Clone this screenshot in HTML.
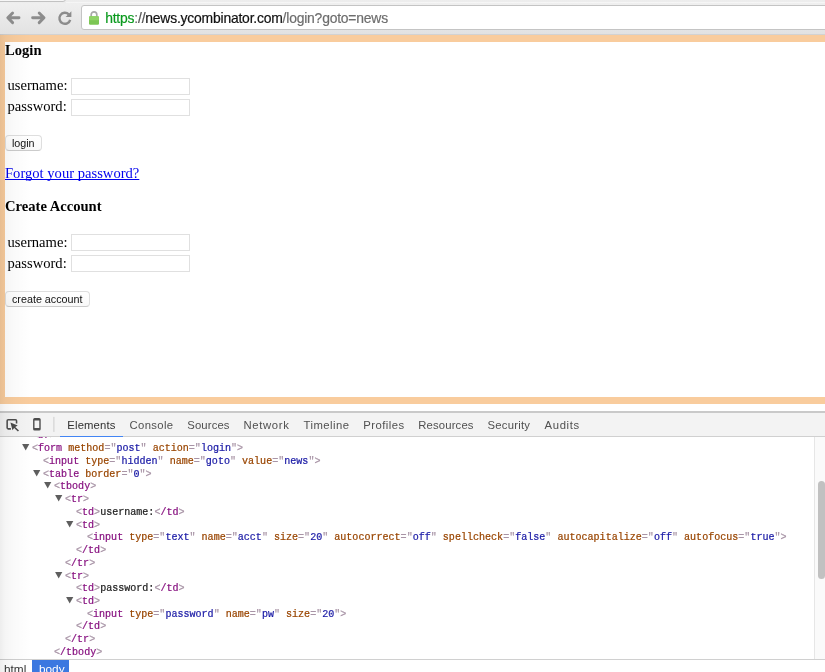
<!DOCTYPE html>
<html><head><meta charset="utf-8">
<style>
*{box-sizing:border-box;margin:0;padding:0}
html,body{width:825px;height:672px;overflow:hidden;background:#fff}
body{position:relative;font-family:"Liberation Sans",sans-serif;will-change:transform}
.abs{position:absolute}
#tabstrip{left:0;top:0;width:825px;height:3px;}
#tabstrip .tab{position:absolute;left:-2px;top:-3px;width:67.5px;height:5.4px;background:#f6f6f6;border:1px solid #c2c2c2;border-radius:0 0 3px 0}
#tabstrip .hl{position:absolute;left:66px;top:2.2px;width:760px;height:1px;background:rgba(255,255,255,0.45)}
#chrome{left:0;top:0px;width:825px;height:34.6px;background:linear-gradient(#ececec,#efefef 12%,#e2e2e2);border-bottom:1px solid #d2d2d2}
#urlbox{left:81px;top:5.4px;width:760px;height:24.2px;background:#fff;border:1px solid #c4c4c4;border-radius:3px;}
#url{left:105.2px;top:10.1px;font-size:13.9px;line-height:16px;white-space:nowrap;color:#6e6e6e;letter-spacing:-0.2px;-webkit-text-stroke:0.2px currentColor}
#url .g{color:#0b9a1e}#url .d{color:#111}#url .s{color:#555}
#orange{left:0;top:34.5px;width:825px;height:369.4px;background:#f9cc9d}
#page{left:4.5px;top:42px;width:821px;height:355px;background:#fff;font-family:"Liberation Serif",serif;font-size:14.6px;color:#000}
.t{position:absolute;white-space:nowrap;line-height:1}
.inp{position:absolute;width:119px;height:17px;border:1px solid #e0e0e0;background:#fff}
.btn{position:absolute;height:16px;border:1px solid #dedede;border-bottom-color:#cbcbcb;border-radius:4px;background:linear-gradient(#fff,#f9f9f9);font-family:"Liberation Sans",sans-serif;font-size:10.75px;line-height:15.4px;text-align:center;color:#111;white-space:nowrap}
.btn span{display:inline-block}
#dt{left:0;top:404px;width:825px;height:268px;background:#fff}
#dtbar{left:0;top:411px;width:825px;height:25.9px;background:#f3f3f3;border-top:2px solid #c9c9c9;border-bottom:1px solid #d0d0d0}
.tabl{position:absolute;top:417.7px;font-size:11.3px;line-height:14px;color:#333;white-space:nowrap}
#tree{left:0;top:437px;width:815px;height:222px;overflow:hidden;font-family:"Liberation Mono",monospace;font-size:10.05px;color:#222}
.ln{position:absolute;white-space:pre;-webkit-text-stroke:0.22px;line-height:12.73px;height:12.73px}
.tg{color:#a894a6}.tn{color:#881280}.an{color:#994500}.av{color:#1a1aa6}.tx{color:#222}
.trs{position:absolute}
.tri{position:absolute;width:0;height:0;border-left:3.9px solid transparent;border-right:3.9px solid transparent;border-top:6.6px solid #5c5c5c}
#sbar{left:814px;top:437px;width:11px;height:222px;background:#fafafa;border-left:1px solid #e6e6e6}
#thumb{left:817.9px;top:480.8px;width:7.2px;height:98.2px;background:#c1c1c1;border-radius:3.6px}
#crumbs{left:0;top:659px;width:825px;height:13px;background:#fff;border-top:1px solid #d0d0d0}
#shade{left:0;top:34px;width:32px;height:638px;background:linear-gradient(to right,rgba(0,0,0,0.07),rgba(0,0,0,0.04) 5px,rgba(0,0,0,0.018) 14px,rgba(0,0,0,0) 32px)}
</style></head><body>
<div class="abs" id="chrome"></div>
<div class="abs" id="tabstrip"><div class="tab"></div><div class="hl"></div></div>
<svg class="abs" style="left:0;top:3px" width="81" height="31" viewBox="0 0 81 31">
 <g fill="none" stroke="#8c8c8c" stroke-width="2.9" stroke-linecap="round" stroke-linejoin="round">
  <path d="M19 14.8H8.4M12.6 10L7.8 14.8L12.6 19.6"/>
  <path d="M32.6 14.8H43.4M39.2 10L44 14.8L39.2 19.6"/>
 </g>
 <path d="M68.8 11.4A5.5 5.5 0 1 0 70.2 16.8" fill="none" stroke="#8c8c8c" stroke-width="2.4"/>
 <path d="M71.4 8.2V14H65.6Z" fill="#8c8c8c"/>
</svg>
<div class="abs" id="urlbox"></div>
<svg class="abs" style="left:87.6px;top:10.2px" width="12" height="16" viewBox="0 0 12 16">
 <path d="M3.2 7V4.6A2.8 2.8 0 0 1 8.8 4.6V7" fill="none" stroke="#a9a9a9" stroke-width="1.7"/>
 <rect x="1" y="6.2" width="10" height="8.6" rx="1.2" fill="#7cc653"/>
 <rect x="1" y="6.2" width="10" height="4" rx="1.2" fill="#8fd366"/>
</svg>
<div class="abs" id="url"><span class="g">https</span>:<span class="s">//</span><span class="d">news.ycombinator.com</span>/login?goto=news</div>

<div class="abs" id="orange"></div>
<div class="abs" id="page">
<div class="t" style="left:0.50px;top:1.10px;font-weight:bold">Login</div>
<div class="t" style="left:3.00px;top:36.10px;">username:</div>
<div class="inp" style="left:66.5px;top:35.5px"></div>
<div class="t" style="left:3.00px;top:57.10px;">password:</div>
<div class="inp" style="left:66.5px;top:56.5px"></div>
<div class="btn" style="left:0.5px;top:92.7px;width:36.5px"><span>login</span></div>
<div class="t" style="left:0.50px;top:124.10px;color:#0000ee;text-decoration:underline;text-decoration-skip-ink:none;text-underline-offset:1.2px;text-decoration-thickness:1px">Forgot your password?</div>
<div class="t" style="left:0.50px;top:157.10px;font-weight:bold">Create Account</div>
<div class="t" style="left:3.00px;top:193.10px;">username:</div>
<div class="inp" style="left:66.5px;top:192.3px"></div>
<div class="t" style="left:3.00px;top:214.10px;">password:</div>
<div class="inp" style="left:66.5px;top:213.3px"></div>
<div class="btn" style="left:0.5px;top:249.2px;width:84.5px"><span>create account</span></div>
</div>

<div class="abs" id="dt"></div>
<div class="abs" id="dtbar"></div>
<svg class="abs" style="left:4px;top:416px" width="52" height="18" viewBox="0 0 52 18">
 <path d="M6.9 12.85H4.2Q3.15 12.85 3.15 11.8V4.7Q3.15 3.65 4.2 3.65H11.5Q12.55 3.65 12.55 4.7V7.6" fill="none" stroke="#4d4d4d" stroke-width="1.55"/>
 <path d="M6.4 6.6L13.7 9.6L11.2 10.9L15 14.5L13.9 15.6L10.1 12L8.5 14.3Z" fill="#4a4a4a"/>
 <path fill-rule="evenodd" fill="#4d4d4d" d="M30.7 2H35.1Q36.7 2 36.7 3.6V12.9Q36.7 14.5 35.1 14.5H30.7Q29.1 14.5 29.1 12.9V3.6Q29.1 2 30.7 2ZM30.5 4.5V11.9H35.3V4.5Z"/>
 <rect x="49.4" y="0.9" width="1" height="15" fill="#cdcdcd"/>
</svg>
<div class="abs" style="left:60px;top:435.6px;width:63px;height:1.4px;background:#4285f4"></div>
<div class="tabl" style="left:67.30px;letter-spacing:0.143px;color:#303030">Elements</div>
<div class="tabl" style="left:129.50px;letter-spacing:0.367px;color:#505050">Console</div>
<div class="tabl" style="left:187.30px;letter-spacing:0.117px;color:#505050">Sources</div>
<div class="tabl" style="left:243.50px;letter-spacing:0.650px;color:#505050">Network</div>
<div class="tabl" style="left:303.60px;letter-spacing:0.443px;color:#505050">Timeline</div>
<div class="tabl" style="left:363.30px;letter-spacing:0.457px;color:#505050">Profiles</div>
<div class="tabl" style="left:418.30px;letter-spacing:0.150px;color:#505050">Resources</div>
<div class="tabl" style="left:487.50px;letter-spacing:0.229px;color:#505050">Security</div>
<div class="tabl" style="left:544.60px;letter-spacing:0.620px;color:#505050">Audits</div>

<div class="abs" id="tree">
<div class="ln" style="left:32.00px;top:-6.53px"><span class="tg">&lt;</span><span class="tn">br</span><span class="tg">&gt;</span></div>
<svg class="trs" style="left:21.80px;top:7.30px" width="8" height="7" viewBox="0 0 8 7"><path d="M0.1 0H7.3L3.7 6.5Z" fill="#5e5e5e"/></svg>
<div class="ln" style="left:32.00px;top:6.20px"><span class="tg">&lt;</span><span class="tn">form</span> <span class="an">method</span><span class="tg">="</span><span class="av">post</span><span class="tg">"</span> <span class="an">action</span><span class="tg">="</span><span class="av">login</span><span class="tg">"</span><span class="tg">&gt;</span></div>
<div class="ln" style="left:43.00px;top:18.93px"><span class="tg">&lt;</span><span class="tn">input</span> <span class="an">type</span><span class="tg">="</span><span class="av">hidden</span><span class="tg">"</span> <span class="an">name</span><span class="tg">="</span><span class="av">goto</span><span class="tg">"</span> <span class="an">value</span><span class="tg">="</span><span class="av">news</span><span class="tg">"</span><span class="tg">&gt;</span></div>
<svg class="trs" style="left:32.80px;top:32.76px" width="8" height="7" viewBox="0 0 8 7"><path d="M0.1 0H7.3L3.7 6.5Z" fill="#5e5e5e"/></svg>
<div class="ln" style="left:43.00px;top:31.66px"><span class="tg">&lt;</span><span class="tn">table</span> <span class="an">border</span><span class="tg">="</span><span class="av">0</span><span class="tg">"</span><span class="tg">&gt;</span></div>
<svg class="trs" style="left:43.80px;top:45.49px" width="8" height="7" viewBox="0 0 8 7"><path d="M0.1 0H7.3L3.7 6.5Z" fill="#5e5e5e"/></svg>
<div class="ln" style="left:54.00px;top:44.39px"><span class="tg">&lt;</span><span class="tn">tbody</span><span class="tg">&gt;</span></div>
<svg class="trs" style="left:54.80px;top:58.22px" width="8" height="7" viewBox="0 0 8 7"><path d="M0.1 0H7.3L3.7 6.5Z" fill="#5e5e5e"/></svg>
<div class="ln" style="left:65.00px;top:57.12px"><span class="tg">&lt;</span><span class="tn">tr</span><span class="tg">&gt;</span></div>
<div class="ln" style="left:76.00px;top:69.85px"><span class="tg">&lt;</span><span class="tn">td</span><span class="tg">&gt;</span><span class="tx">username:</span><span class="tg">&lt;</span><span class="tn">/td</span><span class="tg">&gt;</span></div>
<svg class="trs" style="left:65.80px;top:83.68px" width="8" height="7" viewBox="0 0 8 7"><path d="M0.1 0H7.3L3.7 6.5Z" fill="#5e5e5e"/></svg>
<div class="ln" style="left:76.00px;top:82.58px"><span class="tg">&lt;</span><span class="tn">td</span><span class="tg">&gt;</span></div>
<div class="ln" style="left:87.00px;top:95.31px"><span class="tg">&lt;</span><span class="tn">input</span> <span class="an">type</span><span class="tg">="</span><span class="av">text</span><span class="tg">"</span> <span class="an">name</span><span class="tg">="</span><span class="av">acct</span><span class="tg">"</span> <span class="an">size</span><span class="tg">="</span><span class="av">20</span><span class="tg">"</span> <span class="an">autocorrect</span><span class="tg">="</span><span class="av">off</span><span class="tg">"</span> <span class="an">spellcheck</span><span class="tg">="</span><span class="av">false</span><span class="tg">"</span> <span class="an">autocapitalize</span><span class="tg">="</span><span class="av">off</span><span class="tg">"</span> <span class="an">autofocus</span><span class="tg">="</span><span class="av">true</span><span class="tg">"</span><span class="tg">&gt;</span></div>
<div class="ln" style="left:76.00px;top:108.04px"><span class="tg">&lt;</span><span class="tn">/td</span><span class="tg">&gt;</span></div>
<div class="ln" style="left:65.00px;top:120.77px"><span class="tg">&lt;</span><span class="tn">/tr</span><span class="tg">&gt;</span></div>
<svg class="trs" style="left:54.80px;top:134.60px" width="8" height="7" viewBox="0 0 8 7"><path d="M0.1 0H7.3L3.7 6.5Z" fill="#5e5e5e"/></svg>
<div class="ln" style="left:65.00px;top:133.50px"><span class="tg">&lt;</span><span class="tn">tr</span><span class="tg">&gt;</span></div>
<div class="ln" style="left:76.00px;top:146.23px"><span class="tg">&lt;</span><span class="tn">td</span><span class="tg">&gt;</span><span class="tx">password:</span><span class="tg">&lt;</span><span class="tn">/td</span><span class="tg">&gt;</span></div>
<svg class="trs" style="left:65.80px;top:160.06px" width="8" height="7" viewBox="0 0 8 7"><path d="M0.1 0H7.3L3.7 6.5Z" fill="#5e5e5e"/></svg>
<div class="ln" style="left:76.00px;top:158.96px"><span class="tg">&lt;</span><span class="tn">td</span><span class="tg">&gt;</span></div>
<div class="ln" style="left:87.00px;top:171.69px"><span class="tg">&lt;</span><span class="tn">input</span> <span class="an">type</span><span class="tg">="</span><span class="av">password</span><span class="tg">"</span> <span class="an">name</span><span class="tg">="</span><span class="av">pw</span><span class="tg">"</span> <span class="an">size</span><span class="tg">="</span><span class="av">20</span><span class="tg">"</span><span class="tg">&gt;</span></div>
<div class="ln" style="left:76.00px;top:184.42px"><span class="tg">&lt;</span><span class="tn">/td</span><span class="tg">&gt;</span></div>
<div class="ln" style="left:65.00px;top:197.15px"><span class="tg">&lt;</span><span class="tn">/tr</span><span class="tg">&gt;</span></div>
<div class="ln" style="left:54.00px;top:209.88px"><span class="tg">&lt;</span><span class="tn">/tbody</span><span class="tg">&gt;</span></div>
</div>
<div class="abs" id="sbar"></div>
<div class="abs" id="thumb"></div>
<div class="abs" id="crumbs"></div>
<div class="abs" style="left:32px;top:660px;width:37px;height:12px;background:#3b78e0"></div>
<div class="abs" id="crumb1" style="left:4px;top:661.5px;font-size:11.8px;line-height:14px;color:#333">html</div>
<div class="abs" id="crumb2" style="left:39px;top:661.5px;font-size:11.8px;line-height:14px;color:#fff">body</div>
<div class="abs" id="shade"></div>
</body></html>
